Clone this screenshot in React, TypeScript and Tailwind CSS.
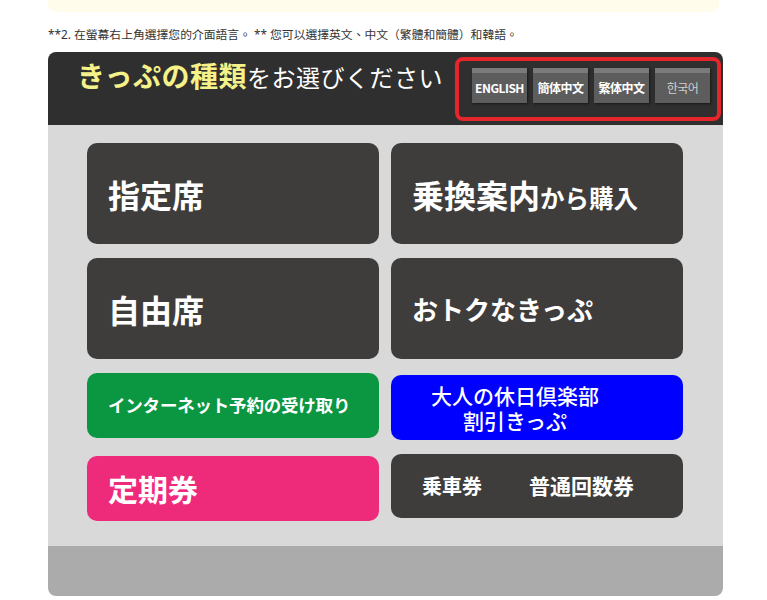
import type { ReactNode } from 'react';

const jp = { fontFamily: '"Noto Sans CJK JP", "Noto Sans", sans-serif' };
const tc = { fontFamily: '"Noto Sans", "Noto Sans CJK TC", sans-serif' };

function Tile({ className, children }: { className: string; children: ReactNode }) {
  return <div className={`flex items-center rounded-[10px] text-white ${className}`}>{children}</div>;
}

function LangButton({ label, dim }: { label: string; dim?: boolean }) {
  return (
    <div className="flex h-[35px] w-[55px] flex-col overflow-hidden bg-[#5d5d5d] shadow-[1px_1px_2px_rgba(0,0,0,0.5)]">
      <div className="h-[5px] bg-[#7a7a7a]" />
      <div
        className={`flex flex-1 items-center justify-center text-[12px] tracking-[-0.5px] ${dim ? 'font-normal text-[#cfcfcf]' : 'font-bold text-white'}`}
      >
        {label}
      </div>
    </div>
  );
}

export default function App() {
  return (
    <div className="min-h-[600px] bg-white" style={jp}>
      <div className="mx-[48px] h-[12px] rounded-b-[8px] bg-[#fffcec]" />

      <p className="mt-[14px] pl-[48px] text-[11.8px] leading-[16px] text-[#333]" style={tc}>
        **2. 在螢幕右上角選擇您的介面語言。 ** 您可以選擇英文、中文（繁體和簡體）和韓語。
      </p>

      <div className="ml-[48px] mt-[10px] w-[675px] overflow-hidden rounded-[8px]">
        {/* header */}
        <div className="flex h-[73px] items-start bg-[#2f2f2f] pl-[29px] pr-[2px]">
          <h1 className="mt-[2px] flex items-baseline whitespace-nowrap">
            <span className="text-[28px] font-bold tracking-[0.5px] text-[#f6f28a]">きっぷの種類</span>
            <span className="text-[24px] font-normal tracking-[0.5px] text-white">をお選びください</span>
          </h1>
          <div className="ml-auto mt-[5px] flex h-[64px] w-[266px] items-start gap-[6px] rounded-[8px] border-[4px] border-[#e5262d] pl-[13px] pt-[7px]">
            <LangButton label="ENGLISH" />
            <LangButton label="簡体中文" />
            <LangButton label="繁体中文" />
            <LangButton label="한국어" dim />
          </div>
        </div>

        {/* menu */}
        <div className="flex h-[421px] gap-[12px] bg-[#d9d9d9] px-[39px] pt-[18px]">
          <div className="flex w-[292px] flex-col">
            <Tile className="h-[101px] bg-[#3e3d3b] pl-[21px]">
              <span className="text-[32px] font-bold">指定席</span>
            </Tile>
            <Tile className="mt-[14px] h-[101px] bg-[#3e3d3b] pl-[21px]">
              <span className="text-[32px] font-bold">自由席</span>
            </Tile>
            <Tile className="mt-[14px] h-[65px] bg-[#0b9641] pl-[21px]">
              <span className="text-[17.5px] font-bold tracking-[-0.2px]">インターネット予約の受け取り</span>
            </Tile>
            <Tile className="mt-[18px] h-[65px] bg-[#ee2a7b] pl-[21px]">
              <span className="text-[30px] font-bold">定期券</span>
            </Tile>
          </div>

          <div className="flex w-[292px] flex-col">
            <Tile className="h-[101px] bg-[#3e3d3b] pl-[21px]">
              <span className="flex items-baseline font-bold">
                <span className="text-[32px]">乗換案内</span>
                <span className="text-[24.5px]">から購入</span>
              </span>
            </Tile>
            <Tile className="mt-[14px] h-[101px] bg-[#3e3d3b] pl-[21px]">
              <span className="text-[26px] font-bold">おトクなきっぷ</span>
            </Tile>
            <Tile className="mt-[16px] h-[65px] justify-center bg-[#0000fe] pr-[44px]">
              <div className="text-center text-[21px] font-medium">
                <div className="leading-[25px]">大人の休日倶楽部</div>
                <div className="leading-[25px]">割引きっぷ</div>
              </div>
            </Tile>
            <Tile className="mt-[14px] h-[64px] gap-[47px] bg-[#3e3d3b] pl-[31px]">
              <span className="text-[20px] font-bold">乗車券</span>
              <span className="text-[21px] font-bold">普通回数券</span>
            </Tile>
          </div>
        </div>

        <div className="h-[50px] bg-[#ababab]" />
      </div>
    </div>
  );
}
